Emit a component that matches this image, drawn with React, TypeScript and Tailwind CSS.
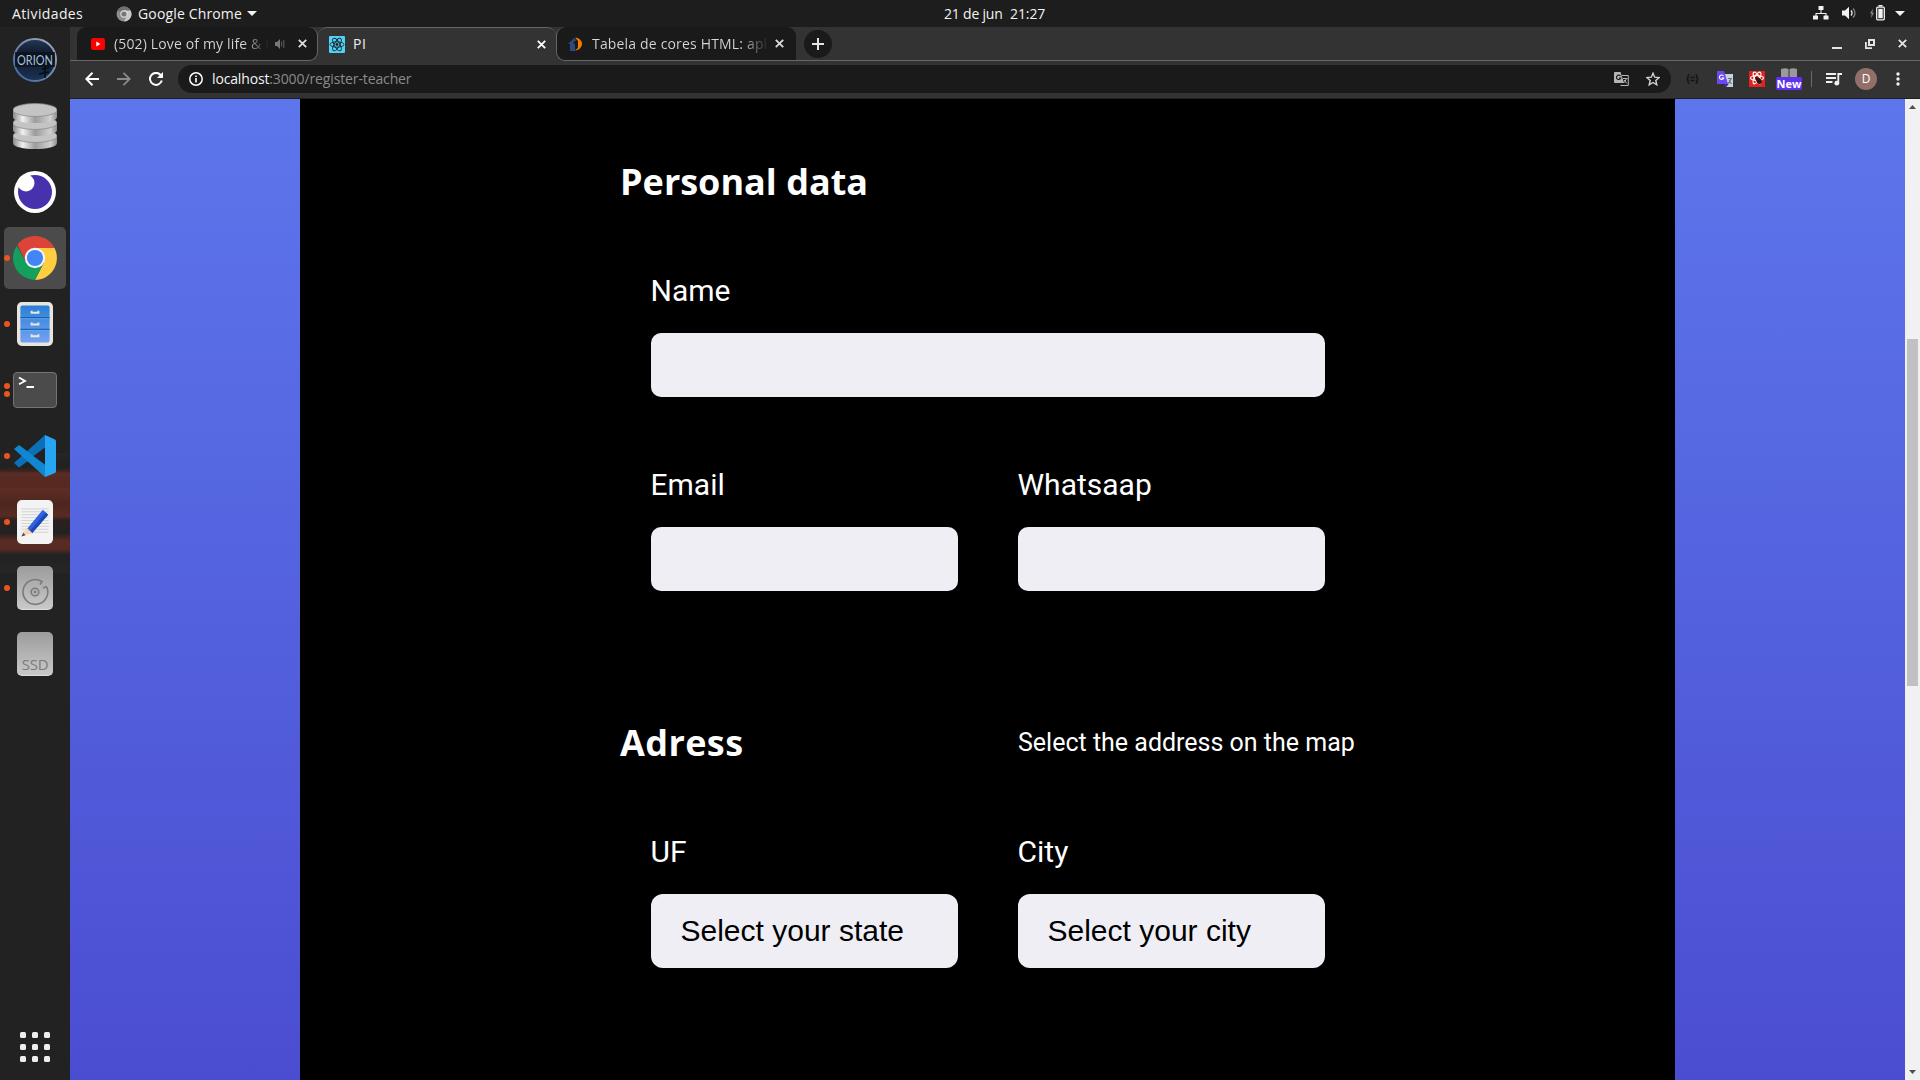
import type { ReactNode } from 'react';

function CloseIcon({ className = 'text-[#e4e4e4]' }: { className?: string }) {
  return (
    <svg width="9" height="9" viewBox="0 0 9 9" className={className} stroke="currentColor" strokeWidth="1.8">
      <path d="M.8.8l7.4 7.4M8.2.8L.8 8.2" />
    </svg>
  );
}

function TopBar() {
  return (
    <header className="grid h-[27px] shrink-0 grid-cols-3 bg-[#1d1d1d] text-[14px] leading-[27px] text-[#f2f2f2]">
      <div className="flex items-center pl-3">
        <span className="w-[104px] tracking-[0.38px]">Atividades</span>
        <svg width="16" height="16" viewBox="0 0 16 16" className="mr-1.5 shrink-0">
          <circle cx="8" cy="8" r="7.5" fill="#8c8c8c" />
          <path d="M8 8L1.4 4.4A7.5 7.5 0 0 1 14.6 4.4z" fill="#707070" />
          <path d="M8 4.4h6.6A7.5 7.5 0 0 1 8 15.5L11.3 9.6z" fill="#c9c9c9" />
          <circle cx="8" cy="8" r="3.7" fill="#dedede" />
          <circle cx="8" cy="8" r="2.6" fill="#777" />
        </svg>
        <span className="w-[109px] tracking-[0.15px]">Google Chrome</span>
        <svg width="10" height="5" viewBox="0 0 10 5"><path d="M0 0h10L5 5z" fill="#f2f2f2" /></svg>
      </div>
      <div className="flex justify-center pl-[104px]">
        <span className="w-[66px] tracking-[-0.2px]">21 de jun</span>
        <span className="w-[70px] tracking-[-0.1px]">21:27</span>
      </div>
      <div className="flex items-center justify-end pr-[15px] pb-0.5">
        <svg width="16" height="14" viewBox="0 0 16 14" fill="#f2f2f2">
          <rect x="5.5" y="0" width="5" height="4" rx=".5" />
          <rect x="0" y="9.5" width="5" height="4" rx=".5" />
          <rect x="10.5" y="9.5" width="5" height="4" rx=".5" />
          <path d="M7.5 4h1v3h5v3h-1V8h-9v2h-1V7h5z" />
        </svg>
        <svg width="16" height="14" viewBox="0 0 16 14" className="ml-[13px]">
          <path d="M0 4.5h3L7 .8v12.4L3 9.5H0z" fill="#f2f2f2" />
          <path d="M9 4.5a3.5 3.5 0 0 1 0 5" fill="none" stroke="#f2f2f2" strokeWidth="1.3" />
          <path d="M11 2.5a6 6 0 0 1 0 9" fill="none" stroke="#8a8a8a" strokeWidth="1.2" />
        </svg>
        <svg width="16" height="16" viewBox="0 0 16 16" className="ml-3">
          <path d="M3 3.5L0 8.5h1.7L1 13l3-5.3H2.3z" fill="#8a8a8a" />
          <rect x="6.7" y="2.2" width="7.6" height="12.6" rx="1" fill="none" stroke="#f2f2f2" strokeWidth="1.3" />
          <rect x="8.3" y="3.8" width="4.4" height="9.4" fill="#f2f2f2" />
          <rect x="8.5" y="0" width="4" height="1.5" fill="#f2f2f2" />
        </svg>
        <svg width="10" height="5" viewBox="0 0 10 5" className="mt-0.5 ml-[9px]"><path d="M0 0h10L5 5z" fill="#f2f2f2" /></svg>
      </div>
    </header>
  );
}

function DockItem({ children, dots = 0, active = false }: { children: ReactNode; dots?: number; active?: boolean }) {
  return (
    <div className="relative flex h-[66px] w-[70px] items-center justify-center">
      {active && <div className="absolute inset-x-1 inset-y-0.5 rounded-[5px] bg-[#4b4b4b]" />}
      <div className="absolute top-0 left-1 flex h-full flex-col items-center justify-center gap-0.5">
        {Array.from({ length: dots }, (_, i) => (
          <span key={i} className="size-1.5 rounded-full bg-[#e95420]" />
        ))}
      </div>
      <div className="relative">{children}</div>
    </div>
  );
}

function Dock() {
  return (
    <aside className="relative flex w-[70px] shrink-0 flex-col bg-[#222222]">
      <div className="absolute inset-x-0 top-[426px] h-[120px] bg-[linear-gradient(#262626_0px,#222_10px,#222_14px,#3a2420_18px,#5a2c23_20px,#54291f_34px,#5c2d24_36px,#4e261f_50px,#582b22_63px,#2a2120_67px,#222_80px,#4a2620_85px,#5a2c23_88px,#572a22_96px,#222_102px,#262626_120px)]" />
      <DockItem>
        <svg width="44" height="44" viewBox="0 0 44 44">
          <defs>
            <linearGradient id="ring" x1="1" y1="0" x2="0" y2="1"><stop stopColor="#a8adb5" /><stop offset="1" stopColor="#3d64a5" /></linearGradient>
            <linearGradient id="sky" x1="0" y1="0" x2="0" y2="1"><stop stopColor="#24395a" /><stop offset=".4" stopColor="#0d1522" /><stop offset="1" stopColor="#1c3558" /></linearGradient>
          </defs>
          <circle cx="22" cy="22" r="21" fill="url(#sky)" stroke="url(#ring)" strokeWidth="2" />
          <path d="M2 14h40v15H2z" fill="#0c131e" opacity=".8" />
          <path d="M32 16v24M29 31l7-1M26 36l10-2" stroke="#080c13" strokeWidth="1.600" />
          <text x="4" y="27" fontFamily="Lato, sans-serif" fontSize="12.500" textLength="36" lengthAdjust="spacingAndGlyphs" fill="#a5c2de">ORION</text>
        </svg>
      </DockItem>
      <DockItem>
        <svg width="44" height="48" viewBox="0 0 44 48">
          <defs>
            <linearGradient id="metal"><stop stopColor="#8a8a8a" /><stop offset=".22" stopColor="#f0f0f0" /><stop offset=".5" stopColor="#9c9c9c" /><stop offset=".85" stopColor="#d0d0d0" /><stop offset="1" stopColor="#8d8d8d" /></linearGradient>
          </defs>
          {[27, 14, 1].map((y) => (
            <g key={y} transform={`translate(0 ${y})`}>
              <path d="M0 7v7c0 8 44 8 44 0V7z" fill="url(#metal)" />
              <ellipse cx="22" cy="7" rx="22" ry="6.5" fill="#c4c4c4" stroke="#8b8b8b" strokeWidth=".8" />
            </g>
          ))}
        </svg>
      </DockItem>
      <DockItem>
        <svg width="42" height="42" viewBox="0 0 42 42">
          <circle cx="21" cy="21" r="21" fill="#fff" />
          <circle cx="21" cy="21" r="17" fill="#4731ad" />
          <circle cx="12" cy="12" r="8.5" fill="#fff" />
        </svg>
      </DockItem>
      <DockItem dots={1} active>
        <svg width="46" height="46" viewBox="-23 -23 46 46">
          <path d="M0-10H19.5A22 22 0 0 1 0 22L8.7 5z" fill="#ffcd40" />
          <path d="M8.7 5L0 22A22 22 0 0 1-18.3-12.2L-8.7 5z" fill="#12a05c" />
          <path d="M0-10H19.6A22 22 0 0 0-17.6-13.3L-8.7 5z" fill="#db4437" />
          <circle r="10.2" fill="#f3f3f3" />
          <circle r="8.1" fill="#4285f4" />
        </svg>
      </DockItem>
      <DockItem dots={1}>
        <svg width="36" height="44" viewBox="0 0 37 45">
          <defs><linearGradient id="cab" x1="0" y1="0" x2="0" y2="1"><stop stopColor="#2980d6" /><stop offset="1" stopColor="#74a2f2" /></linearGradient></defs>
          <rect width="37" height="45" rx="5" fill="#e8e5dd" />
          <rect x="3.5" y="3.5" width="30" height="38" rx="2" fill="url(#cab)" />
          <path d="M3.5 16h30M3.5 28h30" stroke="#1a60b0" strokeWidth="1.2" />
          <path d="M3.5 17.1h30M3.5 29.1h30" stroke="#6aaaf0" strokeWidth=".8" />
          {[10, 22, 34].map((y) => (
            <path key={y} d={`M15 ${y - 1}v2h7V${y - 1}`} fill="none" stroke="#ece7de" strokeWidth="2" />
          ))}
        </svg>
      </DockItem>
      <DockItem dots={2}>
        <div className="h-9 w-11 rounded-[4px] border border-[#747474] bg-[#4b4b4b]">
          <svg width="30" height="18" viewBox="0 0 30 18" fill="none" stroke="#fff" strokeWidth="1.8">
            <path d="M5 4.5L11 8L5 11.2M12.5 14H20" />
          </svg>
        </div>
      </DockItem>
      <DockItem dots={1}>
        <svg width="42" height="42" viewBox="0 0 42 42">
          <path d="M0 28L5 32.5 33 12 31 0z" fill="#0b70b8" />
          <path d="M0 14L5 10 33 31 31 42z" fill="#1087d0" />
          <path d="M31 0L41 4.5Q42 5 42 6.5V36Q42 37.300 41 38L31 42z" fill="#27a4f2" />
          <path d="M31 12.500L19.500 21 31 29.500z" fill="#222" />
        </svg>
      </DockItem>
      <DockItem dots={1}>
        <svg width="36" height="44" viewBox="0 0 37 45">
          <rect width="37" height="45" rx="5" fill="#f3f3f3" />
          <path d="M4.500 9h28M4.500 12h28M4.500 15h28M4.500 18h28M4.500 21h28M4.500 24h28M4.500 27h28M4.500 30h28M4.500 33h28" stroke="#d3d3d3" />
          <path d="M10 30L26.500 10 32 15 15.500 34z" fill="#2f63dd" />
          <path d="M13 32L29.500 12.800 32 15 15.500 34z" fill="#1c48b5" />
          <path d="M10 28.500L16 34 5 37z" fill="#f6d5b3" />
          <path d="M6.500 33.500L8.800 36 4.500 37.500z" fill="#4a4a4a" />
        </svg>
      </DockItem>
      <DockItem dots={1}>
        <div className="flex h-11 w-9 items-center justify-center rounded-[5px] border-b border-[#ddd] bg-linear-to-b from-[#9c9c9c] to-[#c9c9c9]">
          <svg width="28" height="28" viewBox="0 0 28 28" fill="none" stroke="#7b7b7b" strokeWidth="1.6" className="mt-2">
            <path d="M25.500 8.500A12.400 12.400 0 1 1 21 3.500L19 6.500" />
            <path d="M25.500 8.500L22 10" />
            <circle cx="14" cy="14" r="3.800" /><circle cx="14" cy="14" r=".6" />
          </svg>
        </div>
      </DockItem>
      <DockItem>
        <div className="flex h-11 w-9 items-end justify-center rounded-[5px] border-b border-[#ddd] bg-linear-to-b from-[#9c9c9c] to-[#c9c9c9] pb-[3px] text-[15px] leading-4 tracking-[-0.3px] text-[#7b7b7b]">
          SSD
        </div>
      </DockItem>
      <div className="mt-auto mb-[18px] grid grid-cols-3 gap-1.5 self-center">
        {Array.from({ length: 9 }, (_, i) => (
          <span key={i} className="size-1.5 rounded-[1.5px] bg-[#eeeeec]" />
        ))}
      </div>
    </aside>
  );
}

function TabStrip() {
  return (
    <div className="flex h-[34px] shrink-0 bg-[#333333] text-[14px] leading-[33px] text-[#d8d8d8]">
      <div className="w-[7px] border-b border-[#666]" />
      <div className="flex w-[241px] items-center overflow-hidden rounded-t-[9px] rounded-br-[9px] border-r border-b border-[#666] bg-[#1a1a1a] pl-[14px]">
        <svg width="14" height="12" viewBox="0 0 14 12" className="shrink-0">
          <rect width="14" height="12" rx="2.500" fill="#f00" />
          <path d="M5.300 3.500v5L9.500 6z" fill="#fff" />
        </svg>
        <span className="ml-[9px] w-[155px] bg-linear-to-r from-[#d8d8d8] from-83% to-transparent bg-clip-text whitespace-nowrap tracking-[0.15px] text-transparent">(502) Love of my life &amp; I</span>
        <svg width="10" height="10" viewBox="0 0 10 10" className="ml-1.5 shrink-0">
          <path d="M0 3h2l3-3v10L2 7H0z" fill="#777" />
          <path d="M6.600 2.500v5M8.800 1v8" stroke="#555" strokeWidth="1.200" />
        </svg>
        <CloseIcon className="ml-[13px] shrink-0 text-[#dcdcdc]" />
      </div>
      <div className="flex w-[238px] items-center rounded-t-[9px] border-t border-[#666] bg-[#333333] pl-[11px] text-[#f1f1f1]">
        <svg width="16" height="17" viewBox="-8 -8.500 16 17">
          <rect x="-8" y="-8.500" width="16" height="17" rx="1" fill="#4fd2f7" />
          <g fill="none" stroke="#20262e" strokeWidth=".9">
            <ellipse rx="7" ry="2.700" />
            <ellipse rx="7" ry="2.700" transform="rotate(60)" />
            <ellipse rx="7" ry="2.700" transform="rotate(120)" />
          </g>
          <circle r="1.400" fill="#20262e" />
        </svg>
        <span className="-mt-0.5 ml-2 w-[184px] tracking-[0.5px]">PI</span>
        <CloseIcon className="text-white" />
      </div>
      <div className="flex w-[240px] items-center rounded-t-[9px] rounded-bl-[9px] border-b border-l border-[#666] bg-[#1a1a1a] pl-[11px]">
        <svg width="16" height="14" viewBox="0 0 16 14" className="shrink-0">
          <path d="M7 .5A7 6.500 0 1 1 7 13.500L10 11V4z" fill="#f57c00" />
          <path d="M0 7L6 1l2 2-2 3 4 3-3 5H2V7z" fill="#2c4a80" />
          <path d="M5 5l3-1 2 3-1 4-2 2V8z" fill="#1a1a1a" />
        </svg>
        <span className="ml-2 w-[177px] bg-linear-to-r from-[#d8d8d8] from-84% to-transparent bg-clip-text whitespace-nowrap tracking-[0.17px] text-transparent">Tabela de cores HTML: apl</span>
        <CloseIcon className="ml-[6px] shrink-0 text-[#dcdcdc]" />
      </div>
      <div className="flex flex-1 items-center border-b border-[#666]">
        <div className="ml-[8px] flex size-7 items-center justify-center rounded-full bg-[#1a1a1a]">
          <svg width="12" height="12" viewBox="0 0 12 12" stroke="#e4e4e4" strokeWidth="2"><path d="M6 0v12M0 6h12" /></svg>
        </div>
        <svg width="10" height="10" viewBox="0 0 10 10" className="ml-auto"><path d="M0 8h10v2H0z" fill="#e4e4e4" /></svg>
        <svg width="10" height="10" viewBox="0 0 10 10" className="ml-[23px]">
          <path d="M4 1h5v5H4z" fill="none" stroke="#e4e4e4" strokeWidth="2" />
          <path d="M.9 3v6.100H7" fill="none" stroke="#e4e4e4" strokeWidth="1.800" />
        </svg>
        <CloseIcon className="mr-[13px] ml-[23px] text-[#e4e4e4]" />
      </div>
    </div>
  );
}

function AddressBar() {
  return (
    <div className="flex h-[38px] shrink-0 items-center border-b border-[#202020] bg-[#333333] pb-px pl-[15px] text-[14px]">
      <svg width="14" height="14" viewBox="0 0 14 14" fill="none" stroke="#fff" strokeWidth="2"><path d="M14 7H1.500M7.500.8L1.300 7l6.200 6.200" /></svg>
      <svg width="14" height="14" viewBox="0 0 14 14" fill="none" stroke="#8a8a8a" strokeWidth="1.800" className="ml-[18px]"><path d="M0 7h12.500M6.500.8L12.700 7l-6.200 6.200" /></svg>
      <svg width="14" height="14" viewBox="0 0 14 14" className="ml-[18px]">
        <path d="M12.800 8.500A6 6 0 1 1 11.600 3" fill="none" stroke="#fff" strokeWidth="2" />
        <path d="M14 0v6H8z" fill="#fff" />
      </svg>
      <div className="ml-[15px] flex h-7 w-[1493px] items-center rounded-full bg-[#1a1a1a] pr-[11px] pl-[11px]">
        <svg width="14" height="14" viewBox="0 0 14 14"><circle cx="7" cy="7" r="6.200" fill="none" stroke="#fff" strokeWidth="1.500" /><path d="M6.200 6h1.600v4.500H6.200zM6.200 3.500h1.600v1.600H6.200z" fill="#fff" /></svg>
        <span className="-mt-px ml-[9px] tracking-[-0.15px] text-[#f4f4f4]">localhost</span>
        <span className="-mt-px tracking-[-0.12px] text-[#8b8b8b]">:3000/register-teacher</span>
        <svg width="15" height="14" viewBox="0 0 15 14" className="ml-auto">
          <path d="M8 3.500h6.300v10H6.500" fill="none" stroke="#b5b5b5" />
          <path d="M0 1q0-1 1-1h5.500L10 11H1q-1 0-1-1z" fill="#b5b5b5" />
          <path d="M6.500 4A2.200 2.200 0 1 0 6.800 6H5" fill="none" stroke="#222" strokeWidth="1.200" />
          <path d="M9 6.500h4.500M12.500 6.500q-1 3-3 4.500M10 8l3 3.500" fill="none" stroke="#b5b5b5" />
        </svg>
        <svg width="14" height="14" viewBox="0 0 14 14" className="ml-[17px]"><path d="M7 1.200l1.700 4 4.400.4-3.300 2.900 1 4.300L7 10.500l-3.800 2.300 1-4.300L.9 5.600l4.400-.4z" fill="none" stroke="#d2d2d2" strokeWidth="1.400" /></svg>
      </div>
      <svg width="13" height="10" viewBox="0 0 13 10" fill="none" stroke="#151515" strokeWidth="1.500" className="ml-[15px]"><path d="M3.500.7Q2 .7 2 2v1.500Q2 5 .5 5 2 5 2 6.500V8q0 1.300 1.500 1.300M9.500.7Q11 .7 11 2v1.500Q11 5 12.500 5 11 5 11 6.500V8q0 1.300-1.500 1.300M4.300 3.600h4.400M4.300 6.400h4.400" /></svg>
      <svg width="16" height="16" viewBox="0 0 16 16" className="ml-[18px]">
        <path d="M7 3h9v13H9z" fill="#c9d2d6" />
        <path d="M11 7.500h4M14 7.500q-1 4-3.500 5.500M12 9.500l2.500 3.500" fill="none" stroke="#5b7784" strokeWidth="1.200" />
        <path d="M0 0h7l4 13H0z" fill="#6a48f2" />
        <path d="M8 13h3.500L9.500 16z" fill="#4a10c4" />
        <path d="M6.500 5A2.200 2.200 0 1 0 6.700 7H4.800" fill="none" stroke="#fff" strokeWidth="1.200" />
      </svg>
      <svg width="16" height="16" viewBox="-8 -8 16 16" className="ml-4">
        <path d="M-8-8H8V8H-8z" fill="#e3221d" />
        <g fill="none" stroke="#fff" strokeWidth="1.200" transform="translate(0 -1)"><ellipse rx="6.500" ry="2.500" /><ellipse rx="6.500" ry="2.500" transform="rotate(60)" /><ellipse rx="6.500" ry="2.500" transform="rotate(120)" /></g>
        <ellipse cx="2" cy="2" rx="2.500" ry="3.300" fill="#301413" transform="rotate(-35 2 2)" />
        <circle cx="-.5" cy="-.5" r="1.400" fill="#301413" />
      </svg>
      <div className="ml-[11px] flex h-[22px] w-[26px] flex-col items-center">
        <svg width="16" height="9" viewBox="0 0 16 9" className="shrink-0"><path d="M0 1q4-1.500 7.500 0v8H0zM8.500 1Q12-.5 16 1v8H8.500z" fill="#9a9a9a" /></svg>
        <span className="h-[13px] w-[26px] shrink-0 rounded-[2px] bg-[#6133f0] text-center text-[11px] leading-[13px] font-bold text-white">New</span>
      </div>
      <div className="ml-[9px] h-4 w-px bg-[#6a6a6a]" />
      <svg width="16" height="13" viewBox="0 0 16 13" className="ml-[14px]">
        <path d="M0 1h10M0 5h10M0 9h6.500" stroke="#f1f1f1" strokeWidth="1.900" />
        <path d="M12.300 10V1H16" fill="none" stroke="#f1f1f1" strokeWidth="1.800" />
        <circle cx="10.800" cy="10.200" r="2.400" fill="#f1f1f1" />
      </svg>
      <div className="ml-[13px] flex size-[22px] items-center justify-center rounded-full bg-[#92706a] text-[12px] text-white">D</div>
      <svg width="4" height="14" viewBox="0 0 4 14" fill="#f1f1f1" className="ml-[19px]"><circle cx="2" cy="2" r="1.700" /><circle cx="2" cy="7" r="1.700" /><circle cx="2" cy="12" r="1.700" /></svg>
    </div>
  );
}

function Label({ children }: { children: ReactNode }) {
  return <label className="-ml-[0.5px] mb-[22px] block h-10 font-['Roboto',sans-serif] text-[30px] leading-10 text-white">{children}</label>;
}

function Field({ label }: { label: string }) {
  return (
    <div>
      <Label>{label}</Label>
      <div className="h-16 rounded-[10px] bg-[#f0eef5]" />
    </div>
  );
}

function SelectField({ label, value }: { label: string; value: string }) {
  return (
    <div>
      <Label>{label}</Label>
      <div className="h-[74px] rounded-xl bg-[#f0eef5] pl-[29.5px] font-['Liberation_Sans',sans-serif] text-[30px] leading-[74px] text-black">{value}</div>
    </div>
  );
}

function RegisterForm() {
  return (
    <form className="w-[1375px] bg-black pt-[59px] pl-[320px] text-white">
      <h2 className="h-12 text-[36px] leading-[48px] font-bold">Personal data</h2>
      <div className="mt-[65px] ml-[31px] w-[674px]">
        <Field label="Name" />
      </div>
      <div className="mt-[68px] ml-[31px] grid w-[674px] grid-cols-2 gap-x-[60px]">
        <Field label="Email" />
        <Field label="Whatsaap" />
      </div>
      <div className="mt-[128px] flex h-12 leading-[48px]">
        <h2 className="w-[398px] text-[36px] font-bold tracking-[0.4px]">Adress</h2>
        <span className="font-['Roboto',sans-serif] text-[25px]">Select the address on the map</span>
      </div>
      <div className="mt-[65px] ml-[31px] grid w-[674px] grid-cols-2 gap-x-[60px]">
        <SelectField label="UF" value="Select your state" />
        <SelectField label="City" value="Select your city" />
      </div>
    </form>
  );
}

function Scrollbar() {
  return (
    <div className="flex w-[15px] shrink-0 flex-col items-center bg-[#f1f1f1]">
      <svg width="7" height="4" viewBox="0 0 7 4" className="mt-1.5"><path d="M3.500 0L7 4H0z" fill="#505050" /></svg>
      <div className="mt-[230px] h-[347px] w-[11px] bg-[#c1c1c1]" />
      <svg width="7" height="4" viewBox="0 0 7 4" className="mt-auto mb-1.5"><path d="M0 0h7L3.500 4z" fill="#505050" /></svg>
    </div>
  );
}

export default function App() {
  return (
    <div className="flex h-[1080px] w-[1920px] flex-col overflow-hidden bg-black font-['Open_Sans',sans-serif]">
      <TopBar />
      <div className="flex min-h-0 flex-1">
        <Dock />
        <div className="flex min-w-0 flex-1 flex-col">
          <TabStrip />
          <AddressBar />
          <main className="flex min-h-0 flex-1">
            <div className="flex flex-1 justify-center bg-linear-to-b from-[#5d76ec] to-[#4b4dd1]">
              <RegisterForm />
            </div>
            <Scrollbar />
          </main>
        </div>
      </div>
    </div>
  );
}
